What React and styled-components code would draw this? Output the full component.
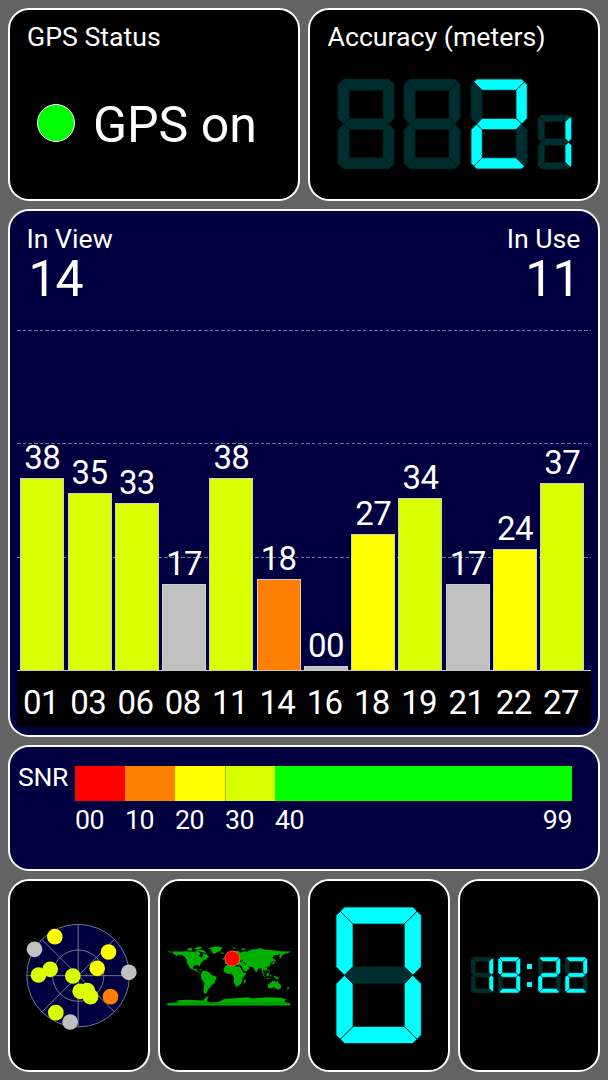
import React from 'react';
import styled, { createGlobalStyle } from 'styled-components';

const GlobalStyle = createGlobalStyle`
  * { box-sizing: border-box; }
  body { margin: 0; background: #636363; }
`;

const Screen = styled.main`
  width: 608px;
  height: 1080px;
  padding: 8px;
  display: grid;
  grid-template-columns: repeat(4, 142px);
  grid-template-rows: 192.5px 528px 126px 193.5px;
  gap: 8px;
  background: #636363;
  color: #fff;
  font-family: Roboto, sans-serif;
`;

const Panel = styled.section`
  grid-column: span ${(p) => p.$span || 1};
  display: flex;
  flex-direction: column;
  min-width: 0;
  border: 2px solid #fff;
  border-radius: 21px;
  background: ${(p) => (p.$navy ? '#000040' : '#000')};
  padding: ${(p) => p.$pad || '0'};
`;

const Tile = styled(Panel)`
  align-items: center;
  justify-content: center;
`;

const Caption = styled.div`
  font-size: 26.7px;
  line-height: 30px;
  white-space: nowrap;
`;

const ScaleName = styled(Caption)`
  font-size: 26.5px;
  letter-spacing: -0.3px;
  margin-top: -4px;
`;

const Large = styled.div`
  font-size: 50px;
  line-height: 50px;
  white-space: nowrap;
`;

const Count = styled(Large)`
  padding: 0 1px 0 2px;
  letter-spacing: -1px;
`;

const StatusLine = styled.div`
  display: flex;
  align-items: center;
  gap: 18px;
  margin-top: 47.5px;
  padding-left: 10px;
`;

const Lamp = styled.span`
  width: 38px;
  height: 38px;
  margin-top: -3px;
  border: 1px solid #fff;
  border-radius: 50%;
  background: #0f0;
`;

const DigitRow = styled.div`
  display: flex;
  align-items: flex-end;
  gap: ${(p) => p.$gap}px;
  margin-top: ${(p) => p.$top || 0}px;
  padding-left: ${(p) => p.$left || 0}px;
`;

const DigitSvg = styled.svg`
  display: block;
  flex: none;
  overflow: visible;
`;

const Colon = styled.div`
  display: flex;
  flex-direction: column;
  align-items: center;
  justify-content: space-between;
  align-self: center;
  width: 10px;
  height: 23px;
`;

const ColonDot = styled.span`
  width: 5px;
  height: 5px;
  background: #0ff;
`;

const Totals = styled.div`
  display: flex;
  justify-content: space-between;
  padding: 0 10.5px 0 9.5px;
`;

const Total = styled.div`
  display: flex;
  flex-direction: column;
  align-items: ${(p) => (p.$end ? 'flex-end' : 'flex-start')};
`;

const Plot = styled.div`
  position: relative;
  height: 366px;
  width: 573.5px;
  margin-top: 1px;
  padding-left: 3.3px;
  display: flex;
  align-items: flex-end;
  gap: 3.27px;
  border-bottom: 1px solid #c8c8c8;
`;

const GridLine = styled.div`
  position: absolute;
  left: 0;
  right: 0;
  bottom: ${(p) => p.$at}px;
  height: 1px;
  background: repeating-linear-gradient(90deg, #5f7d91 0 3.6px, transparent 3.6px 5.67px);
`;

const Column = styled.div`
  position: relative;
  width: 44px;
  flex: none;
  display: flex;
  flex-direction: column;
  align-items: center;
`;

const Bar = styled.div`
  width: 100%;
  border: 1px solid #d0d0c8;
  border-bottom: 0;
  background: ${(p) => p.$color};
`;

const Value = styled.div`
  font-size: 33px;
  line-height: 38px;
  letter-spacing: -0.6px;
  padding-bottom: 1px;
  text-align: center;
`;

const Axis = styled.div`
  display: flex;
  gap: 3.27px;
  width: 573.5px;
  height: 56.5px;
  padding: 13px 0 0 2px;
  background: #000;
`;

const AxisLabel = styled(Value)`
  width: 44px;
  flex: none;
`;

const Legend = styled.div`
  display: grid;
  grid-template-columns: 57px 497px;
  row-gap: 4px;
`;

const Scale = styled.div`
  display: flex;
  height: 35px;
`;

const Band = styled.div`
  width: ${(p) => p.$w}px;
  background: ${(p) => p.$color};
  box-shadow: inset 1px 0 0 ${(p) => p.$edge || 'transparent'};
`;

const Ticks = styled.div`
  grid-column: 2;
  display: flex;
`;

const Tick = styled(Caption)`
  width: ${(p) => p.$w}px;
  letter-spacing: -0.4px;
  text-align: ${(p) => (p.$end ? 'right' : 'left')};
`;

const SEGMENTS = {
  a: '5,0 45,0 47.5,2.5 40,10 10,10 2.5,2.5',
  b: '47.5,2.5 50,5 50,35 45,40 40,35 40,10',
  c: '45,40 50,45 50,75 47.5,77.5 40,70 40,45',
  d: '10,70 40,70 47.5,77.5 45,80 5,80 2.5,77.5',
  e: '5,40 10,45 10,70 2.5,77.5 0,75 0,45',
  f: '2.5,2.5 10,10 10,35 5,40 0,35 0,5',
  g: '5,40 10,35 40,35 45,40 40,45 10,45',
};

const LIT = { '': '', 0: 'abcdef', 1: 'bc', 2: 'abged', 9: 'abcdfg' };

function Digit({ value = '', height }) {
  const names = Object.keys(SEGMENTS);
  return (
    <DigitSvg width={height * 0.625} height={height} viewBox="0 0 50 80">
      {names.map((n) => (
        <polygon
          key={n}
          points={SEGMENTS[n]}
          fill={LIT[value].includes(n) ? '#00ffff' : '#002e2e'}
          stroke="#001c1c"
          strokeWidth={height < 40 ? 0.5 : 0.8}
          vectorEffect="non-scaling-stroke"
        />
      ))}
    </DigitSvg>
  );
}

const LIME = '#d9ff00';
const YELLOW = '#ffff00';
const ORANGE = '#ff8000';
const GREY = '#c0c0c0';

const satellites = [
  ['01', '38', LIME], ['03', '35', LIME], ['06', '33', LIME], ['08', '17', GREY],
  ['11', '38', LIME], ['14', '18', ORANGE], ['16', '00', GREY], ['18', '27', YELLOW],
  ['19', '34', LIME], ['21', '17', GREY], ['22', '24', YELLOW], ['27', '37', LIME],
];

const skyDots = [
  [136, 109, YELLOW], [75, 147, GREY], [297, 155, YELLOW], [263, 204, YELLOW],
  [358, 216, GREY], [87, 224, LIME], [122, 207, LIME], [190, 227, LIME],
  [233, 271, LIME], [212, 273, LIME], [243, 289, LIME], [303, 289, ORANGE],
  [139, 337, LIME], [182, 365, GREY],
];

function SkyPlot() {
  return (
    <svg width="120" height="113.33" viewBox="28.5 56 360 340">
      <g fill="none" stroke="#7d8b9c" strokeWidth="2.6">
        <circle cx="206" cy="226" r="154" fill="#000040" />
        <circle cx="206" cy="226" r="77" />
        <path d="M206 72V380M52 226H360M97 117L315 335M315 117L97 335" />
      </g>
      {skyDots.map(([x, y, c]) => (
        <circle key={`${x}-${y}`} cx={x} cy={y} r="23.5" fill={c} />
      ))}
    </svg>
  );
}

const land = [
  'M22 50L38 52L44 50L60 51L80 50L100 52L110 50L118 54L120 60L116 64L124 70L128 64L127 56L134 58L140 60L146 67L138 72L142 75L132 76L124 84L120 90L118 97L114 92L104 92L98 97L98 103L106 104L108 100L110 108L116 112L124 114L118 115L108 110L98 106L90 102L84 92L80 86L79 76L74 68L66 62L56 61L44 67L48 61L40 60L38 54L22 53Z',
  'M80 44L90 40L98 43L94 48L82 48ZM100 42L116 37L126 37L120 43L110 46ZM106 47L124 46L134 50L138 56L128 54L118 51L106 51Z',
  'M144 41L160 37L174 36L186 39L183 46L178 50L168 54L162 59L155 54L152 46Z',
  'M180 54L190 54L190 57L182 58Z',
  'M112 103L122 105L128 108L120 107Z',
  'M124 113L130 108L140 110L148 114L154 122L170 127L166 136L162 146L154 152L148 160L142 166L138 177L132 178L129 168L132 146L124 134L122 124Z',
  'M196 94L206 90L216 90L220 95L238 96L244 106L250 115L258 115L254 122L246 132L246 140L240 150L232 156L226 155L220 142L221 130L214 118L200 118L190 111L190 102Z',
  'M251 137L257 133L255 144L250 148Z',
  'M194 87L195 80L202 79L198 73L206 70L210 60L220 50L232 49L240 54L252 50L262 51L270 46L284 44L300 41L316 46L340 47L362 50L390 51L388 54L376 57L366 62L360 73L356 66L360 60L344 62L336 68L342 76L334 84L329 85L330 92L325 97L317 98L322 104L316 110L309 104L309 112L314 121L307 116L303 101L296 101L290 108L288 115L282 105L278 98L266 96L268 102L258 110L252 110L245 98L242 94L230 92L220 86L206 84L202 90Z',
  'M193 68L197 66L200 74L194 76ZM188 71L192 71L191 76L187 76Z',
  'M341 72L346 78L344 82L340 88L332 92L334 87L340 82Z',
  'M303 114L312 123L316 130L311 127ZM318 118L326 115L325 125L319 127ZM328 121L334 120L330 128ZM316 131L330 132L329 134L316 133ZM338 123L350 127L358 134L350 134L343 130ZM322 103L326 106L330 114L325 110Z',
  'M323 149L332 144L336 139L344 140L347 144L350 137L355 146L362 152L362 160L354 166L347 162L341 158L328 162L323 160Z',
  'M380 157L388 160L384 164L377 168L382 163Z',
  'M245 42L258 41L248 48L244 47ZM214 40L226 39L222 43Z',
  'M21 213V206L50 204L54 197L80 196L128 198L136 189L146 184L142 192L140 200L150 204L176 202L190 194L210 192L244 190L264 188L276 192L300 190L324 188L360 190L378 194L372 202L390 207V213Z',
];

function WorldMap() {
  return (
    <svg width="124" height="62" viewBox="20 28.5 372 186">
      <g fill="#00b000">
        {land.map((d) => <path key={d} d={d} />)}
      </g>
      <path d="M21 206H390" stroke="#007a00" strokeWidth="2" />
      <path d="M228 96L234 93M238 80L248 79M251 83L255 90" stroke="#000" strokeWidth="3" />
      <circle cx="216" cy="72" r="22.5" fill="#f00" stroke="#ff7a20" strokeWidth="2.5" />
    </svg>
  );
}

const bands = [
  ['00', 50, '#ff0000'], ['10', 50, ORANGE], ['20', 50, YELLOW], ['30', 50, LIME, '#a8b400'],
];

export default function App() {
  return (
    <>
      <GlobalStyle />
      <Screen>
        <Panel $span={2} $pad="12px 17px">
          <Caption>GPS Status</Caption>
          <StatusLine>
            <Lamp />
            <Large>GPS on</Large>
          </StatusLine>
        </Panel>

        <Panel $span={2} $pad="12px 17.5px">
          <Caption>Accuracy (meters)</Caption>
          <DigitRow $gap={10.6} $top={27} $left={10}>
            <Digit height={90} />
            <Digit height={90} />
            <Digit height={90} value="2" />
            <Digit height={54} value="1" />
          </DigitRow>
        </Panel>

        <Panel $span={4} $navy $pad="13px 7px 0">
          <Totals>
            <Total>
              <Caption>In View</Caption>
              <Count>14</Count>
            </Total>
            <Total $end>
              <Caption>In Use</Caption>
              <Count>11</Count>
            </Total>
          </Totals>
          <Plot>
            <GridLine $at={338.5} />
            <GridLine $at={225.3} />
            <GridLine $at={112} />
            {satellites.map(([id, snr, color]) => (
              <Column key={id}>
                <Value>{snr}</Value>
                <Bar $color={color} style={{ height: Math.max(3.5, Number(snr) * 5.05 - 0.6) }} />
              </Column>
            ))}
          </Plot>
          <Axis>
            {satellites.map(([id]) => <AxisLabel key={id}>{id}</AxisLabel>)}
          </Axis>
        </Panel>

        <Panel $span={4} $navy $pad="19.5px 8px">
          <Legend>
            <ScaleName>SNR</ScaleName>
            <Scale>
              {bands.map(([n, w, c, e]) => <Band key={n} $w={w} $color={c} $edge={e} />)}
              <Band $w={297} $color="#00ff00" />
            </Scale>
            <Ticks>
              {bands.map(([n, w]) => <Tick key={n} $w={w}>{n}</Tick>)}
              <Tick $w={148}>40</Tick>
              <Tick $w={149} $end>99</Tick>
            </Ticks>
          </Legend>
        </Panel>

        <Tile><SkyPlot /></Tile>
        <Tile><WorldMap /></Tile>
        <Tile><Digit height={136.5} value="0" /></Tile>
        <Tile>
          <DigitRow $gap={4}>
            <Digit height={36} value="1" />
            <Digit height={36} value="9" />
            <Colon><ColonDot /><ColonDot /></Colon>
            <Digit height={36} value="2" />
            <Digit height={36} value="2" />
          </DigitRow>
        </Tile>
      </Screen>
    </>
  );
}
